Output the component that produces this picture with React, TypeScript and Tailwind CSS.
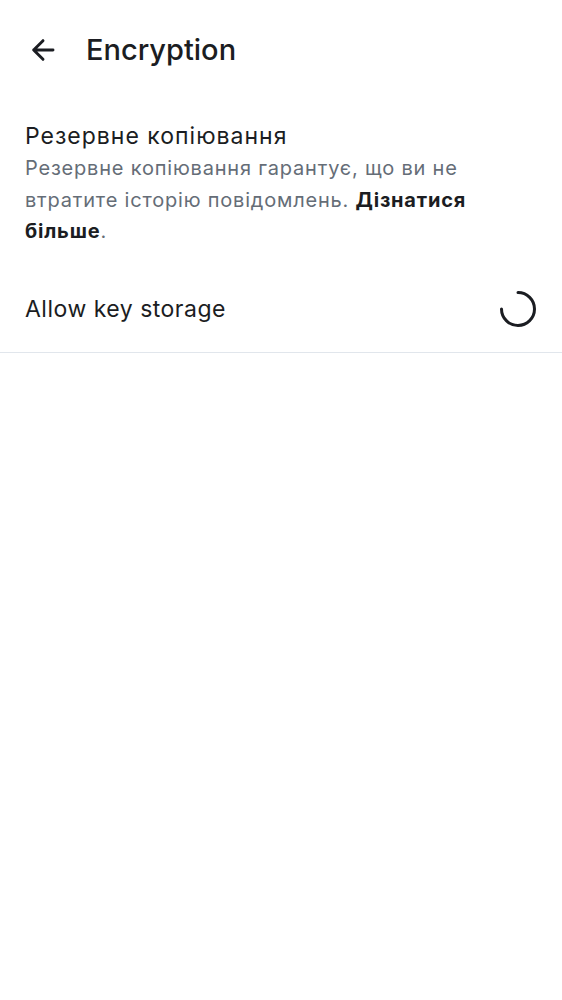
import React from 'react';

const font = { fontFamily: 'Inter, "Noto Sans", sans-serif' };

function BackArrow() {
    return (
        <svg width="32" height="32" viewBox="0 0 24 24" fill="none" className="text-[#1b1d22] shrink-0">
            <path d="M19.5 12H5M12 5l-7 7 7 7" stroke="currentColor" strokeWidth="2.2" strokeLinecap="round" strokeLinejoin="round" />
        </svg>
    );
}

function Spinner() {
    // 270 degree arc, gap on the top-left quarter
    return (
        <svg width="40" height="40" viewBox="0 0 40 40" fill="none" className="shrink-0">
            <path d="M20 3.5 A16.5 16.5 0 1 1 3.5 20" stroke="#1b1d22" strokeWidth="3" strokeLinecap="round" />
        </svg>
    );
}

export default function App() {
    return (
        <div className="w-[562px] min-h-[1000px] bg-white text-[#1b1d22]" style={font}>
            {/* Top bar */}
            <div className="h-[99px] flex items-center pl-[27px] gap-[27px]">
                <BackArrow />
                <h1 className="text-[29px] font-medium leading-none">Encryption</h1>
            </div>

            {/* Backup section */}
            <div className="px-[25px] pt-[21px]">
                <div className="text-[23px] leading-[33px] tracking-[1px]">Резервне копіювання</div>
                <p className="text-[20px] leading-[31.5px] tracking-[0.8px] text-[#656d77] pr-[70px]">
                    Резервне копіювання гарантує, що ви не втратите історію повідомлень.{' '}
                    <span className="font-bold text-[#1b1d22]">Дізнатися більше</span>.
                </p>
            </div>

            {/* Key storage row */}
            <div className="flex items-center justify-between pl-[25px] pr-[24px] pt-[41px] pb-[23px] border-b border-[#e1e6ec]">
                <span className="text-[23px] leading-[32px] tracking-[0.5px]">Allow key storage</span>
                <Spinner />
            </div>
        </div>
    );
}
